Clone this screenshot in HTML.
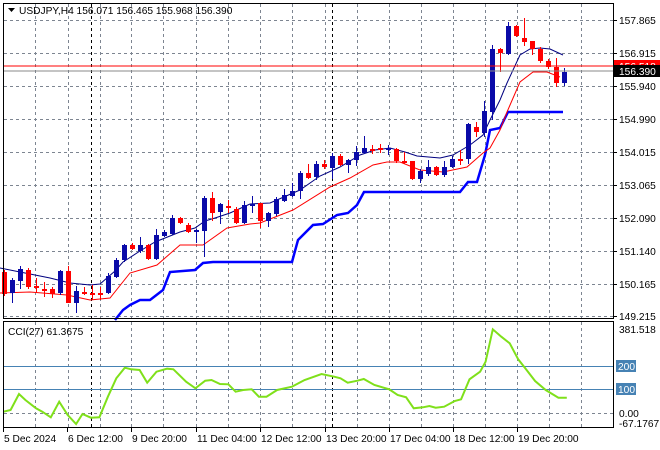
<!DOCTYPE html>
<html><head><meta charset="utf-8"><style>
html,body{margin:0;padding:0;background:#fff;width:660px;height:450px;overflow:hidden}
svg{display:block}
text{font-family:"Liberation Sans",sans-serif;font-size:10.2px;fill:#000}
</style></head><body>
<svg id="s" width="660" height="450" xmlns="http://www.w3.org/2000/svg">
<rect width="660" height="450" fill="#fff"/>
<g id="grid" stroke="#7d8591" stroke-dasharray="3,3" stroke-width="1"></g>
<g id="cgrid"></g>
<polyline id="blue" fill="none" stroke="#0000ff" stroke-width="2.5"/>
<polyline id="red" fill="none" stroke="#ff0000" stroke-width="1"/>
<polyline id="navy" fill="none" stroke="#000080" stroke-width="1"/>
<g id="candles"></g>
<line x1="3" y1="66" x2="614" y2="66" stroke="#ff0000" stroke-width="1"/>
<line x1="3" y1="71" x2="614" y2="71" stroke="#888" stroke-width="1"/>
<polyline id="cci" fill="none" stroke="#7fe01a" stroke-width="2"/>
<rect x="3.5" y="3.5" width="610" height="315" fill="none" stroke="#000"/>
<rect x="3.5" y="321.5" width="610" height="106" fill="none" stroke="#000"/>
<g id="labels"></g>
<path d="M8 8 L15 8 L11.5 12 Z" fill="#000"/>
<text x="19" y="14">USDJPY,H4  156.071 156.465 155.968 156.390</text>
<text x="8" y="335">CCI(27) 61.3675</text>
</svg>
<script>
var NS="http://www.w3.org/2000/svg";
function el(p,t,a,txt){var e=document.createElementNS(NS,t);for(var k in a)e.setAttribute(k,a[k]);if(txt!=null)e.textContent=txt;document.getElementById(p).appendChild(e);return e;}
var vx=[35,68,100,131,163,196,228,260,292,325,357,389,421,453,485,517,549,581];
vx.forEach(function(x){el('grid','line',{x1:x+.5,y1:4,x2:x+.5,y2:318});el('grid','line',{x1:x+.5,y1:322,x2:x+.5,y2:427});});
[20,53,86,119,152,185,218,251,284,316].forEach(function(y){el('grid','line',{x1:4,y1:y+.5,x2:613,y2:y+.5});});
el('grid','line',{x1:4,y1:413.5,x2:613,y2:413.5});
[91,332].forEach(function(x){el('grid','line',{x1:x+.5,y1:4,x2:x+.5,y2:318,stroke:'#000'});el('grid','line',{x1:x+.5,y1:322,x2:x+.5,y2:427,stroke:'#000'});});
el('cgrid','line',{x1:4,y1:366.5,x2:613,y2:366.5,stroke:'#4682b4'});
el('cgrid','line',{x1:4,y1:389.5,x2:613,y2:389.5,stroke:'#4682b4'});
var C=[[272,294,270,296],[293,280,303,278],[281,269,289,266],[270,287,268,289],[286,287,278,293],[289,289,282,297],[289,294,287,298],[293,271,295,270],[271,303,266,303],[303,291,313,286],[292,292,295,287],[293,293,300,285],[293,293,300,287],[293,276,294,273],[277,260,278,258],[260,245,262,244],[245,249,243,250],[251,245,253,237],[245,259,244,260],[259,235,260,229],[236,232,237,230],[234,218,235,215],[218,223,217,224],[225,232,223,233],[232,230,243,229],[231,198,257,196],[198,213,192,221],[212,204,224,203],[206,207,200,213],[209,223,207,224],[223,205,224,201],[205,204,213,196],[203,221,203,228],[221,213,227,212],[214,199,216,197],[201,195,202,189],[196,191,197,183],[191,173,199,171],[173,178,164,179],[177,164,180,161],[164,167,160,169],[168,156,179,153],[156,165,154,166],[165,160,173,159],[160,152,166,146],[153,148,154,136],[149,149,154,145],[148,148,153,144],[149,148,155,145],[149,161,148,163],[161,162,152,164],[161,179,161,180],[179,171,183,169],[174,167,176,160],[167,175,166,176],[175,167,177,161],[167,159,168,156],[159,159,150,165],[159,124,164,123],[127,132,122,137],[133,111,137,101],[112,49,120,45],[49,53,48,72],[54,26,55,22],[26,36,25,37],[38,42,18,46],[41,49,41,55],[49,61,47,63],[61,67,59,69],[67,83,58,87],[83,72,86,68]];
C.forEach(function(c,i){var x=4+8*i;var up=c[1]<c[0];var col=up?'#0a0aa8':'#ff0000';
el('candles','line',{x1:x+.5,y1:c[2],x2:x+.5,y2:c[3],stroke:col,'stroke-width':1});
var t=Math.min(c[0],c[1]),b=Math.max(c[0],c[1]);if(b-t<2){b=t+2;}
el('candles','rect',{x:x-2,y:t,width:5,height:b-t,fill:col});});
document.getElementById('navy').setAttribute('points','0,268 20,272 35,275 50,278 70,283 90,285 100,284 115,271 123,262 140,251 155,242 170,236 180,232 195,228 205,221 215,218 230,213 250,204 270,203 300,190 320,176 340,167 360,155 375,150 390,148 405,152 417,156 440,158 453,155 470,145 483,135 490,120 500,100 507,83 520,55 530,49 540,48 550,49 563,55');
document.getElementById('red').setAttribute('points','0,293 30,292 67,295 90,300 110,298 130,273 157,265 180,245 203,245 227,228 250,224 260,223 293,210 330,187 350,178 373,165 387,162 400,162 420,170 443,172 467,167 483,153 490,148 500,130 507,112 520,82 533,72 547,72 560,77');
document.getElementById('blue').setAttribute('points','115,320 123,310 130,305 140,300 150,300 163,290 170,272 195,270 203,263 213,262 292,262 298,240 313,225 323,224 337,215 348,213 357,205 364,192 460,192 468,182 477,182 485,155 490,130 500,128 508,112 563,112');
var cp=[[8,335],[25,330],[45,282],[60,300],[85,325],[100,335],[120,352],[140,305],[160,345],[180,372],[195,342],[215,353],[235,352],[255,290],[275,235],[295,203],[310,208],[330,210],[348,248],[370,215],[395,206],[410,208],[440,245],[462,265],[485,242],[500,240],[520,252],[540,253],[557,275],[575,270],[595,268],[612,290],[630,290],[655,270],[690,260],[720,240],[760,222],[790,230],[805,235],[822,248],[845,242],[860,237],[885,255],[920,268],[940,285],[960,292],[978,325],[1000,322],[1015,318],[1030,323],[1050,320],[1075,303],[1090,298],[1110,238],[1135,215],[1148,185],[1165,88],[1185,110],[1205,130],[1225,178],[1245,210],[1265,243],[1290,270],[1320,293],[1340,293]];
document.getElementById('cci').setAttribute('points',cp.map(function(p){return (p[0]/2.364).toFixed(1)+','+(300+p[1]/3).toFixed(1)}).join(' '));
var pl=[["157.865",20],["156.915",53],["155.940",86],["154.990",119],["154.015",152],["153.065",185],["152.090",218],["151.140",251],["150.165",284],["149.215",316]];
pl.forEach(function(p){el('labels','line',{x1:614,y1:p[1]+.5,x2:617,y2:p[1]+.5,stroke:'#000'});el('labels','text',{x:619,y:p[1]+4},p[0]);});
el('labels','rect',{x:614,y:60,width:46,height:12,fill:'#ff0000'});
el('labels','text',{x:619,y:70,style:'fill:#fff'},'156.518');
el('labels','rect',{x:614,y:65,width:46,height:12,fill:'#000'});
el('labels','text',{x:619,y:75,style:'fill:#fff'},'156.390');
el('labels','text',{x:619,y:333},'381.518');
el('labels','rect',{x:616,y:360,width:20,height:12,fill:'#4682b4'});
el('labels','text',{x:618,y:370,style:'fill:#fff'},'200');
el('labels','rect',{x:616,y:383,width:20,height:12,fill:'#4682b4'});
el('labels','text',{x:618,y:393,style:'fill:#fff'},'100');
el('labels','text',{x:619,y:417},'0.00');
el('labels','text',{x:619,y:427},'-67.1767');
var dl=[["5 Dec 2024",3],["6 Dec 12:00",67],["9 Dec 20:00",131],["11 Dec 04:00",196],["12 Dec 12:00",260],["13 Dec 20:00",325],["17 Dec 04:00",389],["18 Dec 12:00",453],["19 Dec 20:00",517]];
dl.forEach(function(d){el('labels','line',{x1:d[1]+.5,y1:428,x2:d[1]+.5,y2:432,stroke:'#000'});el('labels','text',{x:d[1]+1,y:442},d[0]);});
</script>
</body></html>
